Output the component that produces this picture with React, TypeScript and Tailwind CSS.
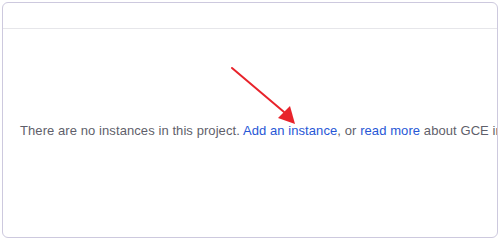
export default function App() {
  return (
    <div className="relative h-[240px] w-[500px] bg-white p-[2px] font-['Liberation_Sans',Arial,sans-serif]">
      <div className="flex h-[236px] w-[496px] flex-col overflow-hidden rounded-[6px] border border-[#cdc9de] bg-white">
        <div className="h-[26px] shrink-0 border-b border-[#e6e6ea]" />
        <div className="flex-1 pl-[17px] pt-[94px]">
          <p className="whitespace-nowrap text-[13px] leading-[16px] tracking-[0.08px] text-[#5f5f6b]">
            There are no instances in this project.{' '}
            <a href="#" className="text-[#2757d6]">
              Add an instance
            </a>
            , or{' '}
            <a href="#" className="text-[#2757d6]">
              read more
            </a>{' '}
            about GCE instances.
          </p>
        </div>
      </div>
      <svg
        className="pointer-events-none absolute left-0 top-0"
        width="500"
        height="240"
        viewBox="0 0 500 240"
      >
        <line x1="232" y1="68" x2="284" y2="112" stroke="#e8232b" strokeWidth="2" strokeLinecap="round" />
        <polygon points="295,124 278,118 290,106" fill="#e8232b" />
      </svg>
    </div>
  )
}
